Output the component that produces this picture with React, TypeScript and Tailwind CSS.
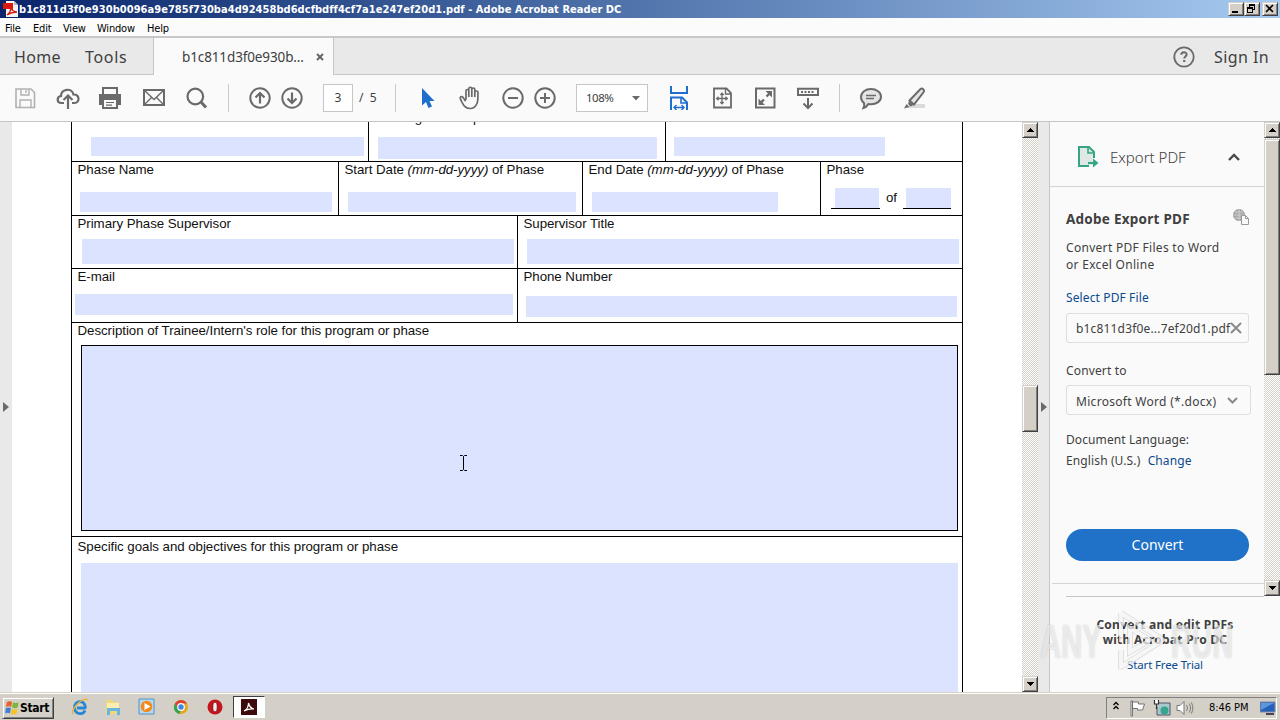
import type { ReactNode } from "react";
import clsx from "clsx";

interface IconProps {
  className?: string;
  children: ReactNode;
}

// 24x24 outline icon used all over the Acrobat toolbar
const Icon = ({ className, children }: IconProps) => (
  <svg
    viewBox="0 0 24 24"
    className={clsx("size-6 shrink-0", className)}
    fill="none"
    stroke="currentColor"
    strokeWidth={2}
  >
    {children}
  </svg>
);

const Divider = ({ className }: { className?: string }) => (
  <div className={clsx("h-7 w-px shrink-0 bg-[#c9c9c9]", className)} />
);

const bevel =
  "border border-t-[#d4d0c8] border-l-[#d4d0c8] border-r-[#404040] border-b-[#404040] bg-[#d4d0c8] shadow-[inset_1px_1px_0_#fff,inset_-1px_-1px_0_#808080]";

const ScrollButton = ({ down }: { down?: boolean }) => (
  <div className={clsx("flex h-4 w-full shrink-0 items-center justify-center", bevel)}>
    <svg viewBox="0 0 7 4" className="h-1 w-[7px]" shapeRendering="crispEdges">
      <path d={down ? "M0 0h7L3.500 4z" : "M0 4h7L3.500 0z"} fill="#000" />
    </svg>
  </div>
);

const track =
  "bg-[repeating-conic-gradient(#d4d0c8_0_25%,#ffffff_0_50%)] bg-[length:2px_2px]";

const TitleBar = () => (
  <div className="flex h-[18px] items-center bg-linear-to-r from-[#0a246a] to-[#a6caf0] pr-[2px] pl-[3px]">
    <svg viewBox="0 0 16 16" className="size-4 shrink-0">
      <path d="M3 0h8l4 4v12H3z" fill="#f4f4f4" />
      <path d="M11 0l4 4h-4z" fill="#bbb" />
      <path d="M0 2h10v6H0z" fill="#d9190f" />
      <path d="M4 14c3-2 4-6 4-8 1 4 3 5 6 5-4 0-7 1-10 3z" fill="none" stroke="#d9190f" strokeWidth="1.300" />
    </svg>
    <span className="pt-px font-['DejaVu_Sans_Condensed','DejaVu_Sans',sans-serif] text-[11px] leading-[17px] font-bold tracking-[0.045px] whitespace-nowrap text-white">
      b1c811d3f0e930b0096a9e785f730ba4d92458bd6dcfbdff4cf7a1e247ef20d1.pdf - Adobe Acrobat Reader DC
    </span>
    <div className="ml-auto flex shrink-0">
      <div className={clsx("h-[14px] w-4", bevel)}>
        <svg viewBox="0 0 14 12" className="h-3 w-3.5" shapeRendering="crispEdges">
          <path d="M3 8h6v2H3z" />
        </svg>
      </div>
      <div className={clsx("h-[14px] w-4", bevel)}>
        <svg viewBox="0 0 14 12" className="h-3 w-3.5" shapeRendering="crispEdges">
          <path d="M4 1h6v6H8V6h1V3H5v1H4zM2 4h6v6H2zM3 6v3h4V6z" fillRule="evenodd" />
        </svg>
      </div>
      <div className={clsx("ml-[2px] h-[14px] w-4", bevel)}>
        <svg viewBox="0 0 14 12" className="h-3 w-3.5">
          <path d="M3 2l7 7M10 2L3 9" stroke="#000" strokeWidth="1.600" />
        </svg>
      </div>
    </div>
  </div>
);

const MenuBar = () => (
  <div className="flex h-5 items-center border-b-2 border-[#c8c8c8] bg-[#fbfbfb] pt-[3px] pl-[5px] font-['DejaVu_Sans_Condensed','DejaVu_Sans',sans-serif] text-[11px] leading-[15px] tracking-[-0.2px] text-black">
    <span className="w-[28px]">File</span>
    <span className="w-[30px]">Edit</span>
    <span className="w-[34px]">View</span>
    <span className="w-[50px]">Window</span>
    <span>Help</span>
  </div>
);

const TabBar = () => (
  <div className="flex h-[37px] font-['Noto_Sans',sans-serif] text-[#404040]">
    <div className="flex w-[153px] items-center border-b border-[#c6c6c6] bg-[#e9e9e9] pt-px pl-[14px] text-base tracking-[0.3px]">
      <span className="w-[71px]">Home</span>
      <span className="tracking-[0.7px]">Tools</span>
    </div>
    <div className="flex w-[181px] items-center border-x border-[#c6c6c6] bg-[#fafafa] pt-px pl-7 text-[13.500px]">
      <span className="w-[134px] tracking-[-0.12px]">b1c811d3f0e930b...</span>
      <svg viewBox="0 0 8 8" className="size-2">
        <path d="M1 1l6 6M7 1L1 7" stroke="#666" strokeWidth="2" />
      </svg>
    </div>
    <div className="flex flex-1 items-center justify-end border-b border-[#c6c6c6] bg-[#e9e9e9] pt-px pr-[11px] text-base tracking-[0.4px]">
      <Icon className="mr-[18px] text-[#6a6a6a]">
        <circle cx="12" cy="12" r="9.700" strokeWidth="1.800" />
        <path d="M9.300 9.800c0-3.400 5.300-3.300 5.300-.3 0 1.900-2.400 2-2.400 4" />
        <path d="M11.100 15h2.200v2h-2.200z" fill="currentColor" stroke="none" />
      </Icon>
      <span>Sign In</span>
    </div>
  </div>
);

const Toolbar = () => (
  <div className="flex h-[47px] items-center border-b border-[#c6c6c6] bg-[#fafafa] pl-[13px] font-['Noto_Sans',sans-serif] text-xs text-[#404040] [&>svg]:text-[#6a6a6a]">
    <Icon className="opacity-50">
      <path d="M3 3h15l3.500 3.500V21.500H3z" strokeWidth="1.600" />
      <path d="M8 3v6h8V3M7 21v-7h11v7M13 4v3" strokeWidth="1.400" />
    </Icon>
    <Icon className="ml-[19px]">
      <path d="M8 17H5.500C.5 17 .5 10.500 5 10c0-7.500 11-8.500 12.500-1.500C24 8 24 17 18.500 17H16" strokeWidth="2.200" />
      <path d="M12 23V10M7.500 14L12 9.500l4.500 4.500" strokeWidth="2.200" />
    </Icon>
    <Icon className="ml-[18px]">
      <path d="M1 8h22v11h-4v-4H5v4H1z" fill="currentColor" stroke="none" />
      <path d="M5 8V2h14v6M5 14v8h14v-8" />
      <path d="M6 14h12v7H6z" fill="#fafafa" stroke="none" />
      <path d="M8 16.500h8M8 19.200h6" strokeWidth="1.200" />
    </Icon>
    <Icon className="ml-5">
      <path d="M2 4h20v15H2z" />
      <path d="M2.500 4.500L12 13.500l9.500-9M2.500 18.500l7-7M21.500 18.500l-7-7" strokeWidth="1.400" />
    </Icon>
    <Icon className="ml-[19px]">
      <circle cx="10.300" cy="10.500" r="7.800" strokeWidth="2.200" />
      <path d="M16 16l5 5.500" strokeWidth="3" />
    </Icon>
    <Divider className="ml-[19px]" />
    <Icon className="ml-[19px]">
      <circle cx="12" cy="12" r="9.700" />
      <path d="M12 17.500V7.500M7.500 11.500L12 7l4.500 4.500" strokeWidth="2.200" />
    </Icon>
    <Icon className="ml-2">
      <circle cx="12" cy="12" r="9.700" />
      <path d="M12 6.500v10M7.500 12.500L12 17l4.500-4.500" strokeWidth="2.200" />
    </Icon>
    <div className="ml-[19px] flex h-7 w-[30px] items-center justify-center border border-[#c6c6c6] bg-white">3</div>
    <span className="ml-[6px] w-6 whitespace-pre">/  5</span>
    <Divider className="ml-3" />
    <Icon className="ml-5 text-[#1e6fcc]!">
      <path d="M6 2v17.500l4-3.500 2.500 6 3.500-1.500-2.500-5.500h5z" fill="currentColor" stroke="none" />
    </Icon>
    <Icon className="ml-[18px]">
      <path
        d="M6.500 13.500V5.500c0-2 2.800-2 2.800 0V11.500V3.300c0-2.100 3-2.100 3 0V11.500V4c0-2 3-2 3 0v7.500V7c0-2 3.200-2 3.200 0-.2 4 .3 8-1 11-1.500 3.500-4 5-7 5-4.500 0-6.200-2.500-8-6.200L.9 13.300c-.9-2 1.500-2.800 2.700-1.300l2 3z"
        transform="translate(1.500 -.5)"
        strokeWidth="1.700"
      />
    </Icon>
    <Icon className="ml-[19px]">
      <circle cx="12" cy="12" r="9.700" />
      <path d="M7 12h10" />
    </Icon>
    <Icon className="ml-2">
      <circle cx="12" cy="12" r="9.700" />
      <path d="M7 12h10M12 7v10" />
    </Icon>
    <div className="ml-[19px] flex h-7 w-[72px] items-center justify-between border border-[#c6c6c6] bg-white pr-[7px] pl-[9px] text-[11.500px] tracking-[-0.5px]">
      108%
      <svg viewBox="0 0 8 5" className="h-[5px] w-2">
        <path d="M0 0h8L4 4.500z" fill="#6a6a6a" />
      </svg>
    </div>
    <Icon className="ml-[19px] text-[#1e6fcc]!">
      <path d="M4 0v7h16V0M4 24V11.500h11l5 5V24" />
      <path d="M14 11.500V17h6" strokeWidth="1.600" />
      <path d="M7 21.500h10M9.500 19L7 21.500l2.500 2.500M14.500 19l2.500 2.500-2.500 2.500" strokeWidth="1.400" />
    </Icon>
    <Icon className="ml-[19px]">
      <path d="M4 2.500h12.500L21 7v14.500H4z" strokeWidth="1.800" />
      <path d="M15.500 2.500V8H21" strokeWidth="1.400" />
      <path d="M12 7.500v10M7 12.500h10M10.300 9L12 7.200 13.700 9M10.300 16l1.700 1.800 1.700-1.800M8.500 10.800l-1.800 1.700 1.800 1.700M15.500 10.800l1.800 1.700-1.800 1.700" strokeWidth="1.300" />
    </Icon>
    <Icon className="ml-[19px]">
      <path d="M3 2.500h18.500v19H3z" />
      <path d="M7 17.500l4-4M13.500 10.500l4-4" strokeWidth="2.400" />
      <path d="M5.500 12.500v6.500h6.500zM19 5h-6.500l6.500 6.500z" fill="currentColor" stroke="none" />
    </Icon>
    <Icon className="ml-[19px]">
      <path d="M2 2.800h20V9H2z" />
      <path d="M5 6h14" strokeDasharray="2 1.500" />
      <path d="M12 12v9.500M7.500 17.500L12 22l4.500-4.500" />
    </Icon>
    <Divider className="ml-[19px]" />
    <Icon className="ml-[19px]">
      <path d="M12 3c5.500 0 10 3.300 10 7.700s-4.500 7.600-10 7.600c-1 0-1.800 0-2.700-.2C8 20 6.500 21.500 4.500 22c.8-1.600.9-3.300.5-5-1.800-1.400-3-3.500-3-6C2 6.300 6.500 3 12 3z" fill="#e4e4e4" />
      <path d="M7 9.500h10M7 12.500h8" strokeWidth="1.300" />
    </Icon>
    <Icon className="ml-[19px]">
      <path d="M9 18h14v4H5z" fill="#dadada" stroke="none" />
      <path d="M7.500 14.500L18.500 3c1.800-1.400 4.500.8 3.200 3L12 18.500z" fill="#e4e4e4" />
      <path d="M7 15l4.500 4-3 1.500-2.500-2.500zM4.500 18l3 3-5.500 1.500z" fill="currentColor" stroke="none" />
    </Icon>
  </div>
);

interface CellProps {
  label?: ReactNode;
  className?: string;
  field?: string;
  children?: ReactNode;
}

// one boxed cell of the form: label at the top, blue field under it
const Cell = ({ label, className, field, children }: CellProps) => (
  <div className={clsx("shrink-0 overflow-hidden", className)}>
    {label && <p className="h-[15px] pl-[5.500px] leading-[15px] whitespace-nowrap">{label}</p>}
    {field && <div className={clsx("bg-[#dce3ff]", field)} />}
    {children}
  </div>
);

const Page = () => (
  <div className="ml-[59px] flex h-full w-[892px] flex-col overflow-hidden border-x border-black font-['Liberation_Sans',Arial,sans-serif] text-[13.300px] tracking-[-0.045px] text-[#111]">
    <div className="flex h-10 shrink-0 border-b border-black">
      <Cell className="w-[297px] border-r border-black pt-[15px]" field="ml-[19px] h-[19px] w-[273px]" />
      <div className="relative w-[297px] shrink-0 overflow-hidden border-r border-black pt-[15px]">
        <span className="absolute top-[-12px] left-[8px] leading-[15px] tracking-[-0.35px] whitespace-nowrap">
          Training/Internship
        </span>
        <div className="ml-[9px] h-[22px] w-[279px] bg-[#dce3ff]" />
      </div>
      <Cell className="pt-[15px]" field="ml-2 h-[19px] w-[211px]" />
    </div>
    <div className="flex h-[54px] shrink-0 border-b border-black">
      <Cell label="Phase Name" className="w-[267px] border-r border-black" field="mt-[15px] ml-2 h-5 w-[252px]" />
      <Cell
        label={<>Start Date <i>(mm-dd-yyyy)</i> of Phase</>}
        className="w-[244px] border-r border-black"
        field="mt-[15px] ml-[9px] h-5 w-[228px]"
      />
      <Cell
        label={<>End Date <i>(mm-dd-yyyy)</i> of Phase</>}
        className="w-[238px] border-r border-black"
        field="mt-[15px] ml-[9px] h-5 w-[186px]"
      />
      <Cell label="Phase" className="w-[141px]">
        <div className="mt-[11px] flex pl-[10px]">
          <div className="h-[21px] w-[49px] border-b border-black pr-px pl-1">
            <div className="h-5 bg-[#dce3ff]" />
          </div>
          <span className="w-[23px] pt-[2px] text-center leading-[15px]">of</span>
          <div className="h-[21px] w-12 border-b border-black pl-[3px]">
            <div className="h-5 bg-[#dce3ff]" />
          </div>
        </div>
      </Cell>
    </div>
    <div className="flex h-[53px] shrink-0 border-b border-black">
      <Cell label="Primary Phase Supervisor" className="w-[446px] border-r border-black" field="mt-2 ml-[10px] h-[25px] w-[432px]" />
      <Cell label="Supervisor Title" className="w-[444px]" field="mt-2 ml-[9px] h-[25px] w-[432px]" />
    </div>
    <div className="flex h-[54px] shrink-0 border-b border-black">
      <Cell label="E-mail" className="w-[446px] border-r border-black" field="mt-[10px] ml-[3px] h-[21px] w-[438px]" />
      <Cell label="Phone Number" className="w-[444px]" field="mt-3 ml-2 h-[21px] w-[431px]" />
    </div>
    <Cell
      label="Description of Trainee/Intern's role for this program or phase"
      className="h-[214px] border-b border-black"
      field="mt-[7px] ml-[9px] h-[186px] w-[877px] border border-black"
    />
    <Cell
      label="Specific goals and objectives for this program or phase"
      className="h-[155px] pt-[2px]"
      field="mt-[9px] ml-[9px] h-[129px] w-[877px]"
    />
  </div>
);

const ExportPanel = () => (
  <aside className="flex w-[230px] shrink-0 flex-col bg-[#fafafa] font-['Noto_Sans',sans-serif] text-[12px] leading-[17px] text-[#404040]">
    <div className="flex h-[475px]">
      <div className="w-[214px]">
        <div className="flex h-[65px] items-center border-b border-[#d4d4d4] pt-[6px] pl-[27px]">
          <svg viewBox="0 0 22 22" className="size-[22px]" fill="none" stroke="#35a585" strokeWidth="2">
            <path d="M12 20H2V1h10l5 5v6" fill="#e0e8e6" />
            <path d="M11 1v6h6" strokeWidth="1.600" />
            <path d="M11 17h6" strokeWidth="2.200" />
            <path d="M16 12.500l5.500 4.500-5.500 4.500z" fill="#35a585" stroke="none" />
          </svg>
          <span className="ml-[11px] w-[118px] text-[15px] font-light">Export PDF</span>
          <svg viewBox="0 0 12 8" className="h-2 w-3">
            <path d="M1 7l5-5 5 5" fill="none" stroke="#4a4a4a" strokeWidth="2.400" />
          </svg>
        </div>
        <div className="pt-[22px] pl-4">
          <div className="flex h-5 w-[183px] items-start justify-between">
            <h2 className="text-[13.500px] leading-5 font-bold tracking-[0.25px]">Adobe Export PDF</h2>
            <svg viewBox="0 0 16 16" className="size-4" fill="none" stroke="#999">
              <circle cx="6" cy="6" r="5.500" fill="#aaa" />
              <path d="M0 6h12M6 0v12M2 3h8M2 9h8" stroke="#ddd" strokeWidth=".7" />
              <path d="M8.500 6.500h4l3 3v6h-7z" fill="#fafafa" />
              <path d="M12.500 6.500v3h3" />
            </svg>
          </div>
          <p className="mt-[10px] w-[180px] tracking-[0.3px]">Convert PDF Files to Word<br />or Excel Online</p>
          <p className="mt-4 tracking-[0.12px] text-[#0b4a8f]">Select PDF File</p>
          <div className="mt-[7px] flex h-[30px] w-[183px] items-center justify-between rounded-[3px] border border-[#dedede] pr-[6px] pl-[9px]">
            <span className="w-[150px] tracking-[0.17px] whitespace-nowrap">b1c811d3f0e...7ef20d1.pdf</span>
            <svg viewBox="0 0 12 12" className="size-3 shrink-0">
              <path d="M1 1l10 10M11 1L1 11" stroke="#8a8a8a" strokeWidth="2" />
            </svg>
          </div>
          <p className="mt-[19px] tracking-[0.15px]">Convert to</p>
          <div className="mt-[6px] flex h-[30px] w-[185px] items-center justify-between rounded-[3px] border border-[#dedede] pr-3 pl-[9px]">
            <span className="pt-[2px] tracking-[0.3px] whitespace-nowrap">Microsoft Word (*.docx)</span>
            <svg viewBox="0 0 11 7" className="h-[7px] w-[11px]">
              <path d="M1 1l4.500 4.500L10 1" fill="none" stroke="#8a8a8a" strokeWidth="2" />
            </svg>
          </div>
          <p className="mt-4 tracking-[0.1px]">Document Language:</p>
          <p className="mt-1 tracking-[0.12px]">
            English (U.S.) <span className="ml-1 text-[#0b4a8f]">Change</span>
          </p>
          <button className="mt-[60px] block h-8 w-[183px] rounded-full bg-[#1f72c8] text-sm text-white">Convert</button>
        </div>
        <div className="mt-[22px] ml-[2px] h-px bg-[#d4d4d4]" />
        <div className="mt-3 ml-4 h-px bg-[#c6c6c6]" />
      </div>
      <div className={clsx("flex h-[474px] w-4 flex-col", track)}>
        <ScrollButton />
        <div className={clsx("mt-px h-[236px] w-4", bevel)} />
        <div className="mt-auto">
          <ScrollButton down />
        </div>
      </div>
    </div>
    <div className="pt-[20px] text-center">
      <p className="text-[12px] leading-[15px] font-bold tracking-[0.25px]">
        Convert and edit PDFs<br />with Acrobat Pro DC
      </p>
      <p className="mt-[9px] text-[11.500px] tracking-[-0.15px] text-[#0b4a8f]">Start Free Trial</p>
    </div>
  </aside>
);

const Taskbar = () => (
  <div className="flex h-7 items-center border-t border-[#d4d0c8] bg-[#d4d0c8] pl-[2px] font-['DejaVu_Sans_Condensed','DejaVu_Sans',sans-serif] text-[11px] text-black shadow-[inset_0_1px_0_#fff]">
    <div className={clsx("mt-[2px] flex h-[22px] w-[52px] items-center pl-[2px] font-bold", bevel)}>
      <svg viewBox="0 0 16 16" className="size-[15px] shrink-0">
        <path d="M2 2c2-1 4-1 5.500 0L6.500 7.500C5 6.500 3 6.500 1 7.500z" fill="#e8602c" />
        <path d="M8.500 2.500c2 1 4 1 6 0l-1 5.500c-2 1-4 1-6 0z" fill="#79b83c" />
        <path d="M.8 8.800c2-1 4-1 5.500 0l-1 5.500c-1.500-1-3-1-5 0z" fill="#3f7fd8" />
        <path d="M7.300 9.300c2 1 4 1 6 0l-1 5.500c-2 1-4 1-6 0z" fill="#f5c129" />
      </svg>
      <span className="pt-px text-[12px] tracking-[-0.35px]">Start</span>
    </div>
    <svg viewBox="0 0 18 18" className="mt-px ml-[17px] size-[18px]">
      <path d="M14 12.500c-2 5-10.500 4-10.500-3s9-8 10.800-1c.2 1-.1 1.500-.3 1.500H6" fill="none" stroke="#2687d6" strokeWidth="2.800" />
      <path d="M2 16C-1 12 12-2 17 2" fill="none" stroke="#e9b23a" strokeWidth="1.400" />
    </svg>
    <svg viewBox="0 0 18 18" className="mt-px ml-[15px] size-[18px]">
      <path d="M2 2h6l1 2h6v12H2z" fill="#f2d87c" />
      <path d="M3 5h12v5H3z" fill="#fbeeb0" />
      <path d="M3 10h13v7h-3v-4H6v4H3z" fill="#68b5df" />
    </svg>
    <svg viewBox="0 0 18 18" className="mt-px ml-4 size-[18px]">
      <path d="M1 1h15v15H1z" fill="#b8d8f0" stroke="#4d94c9" />
      <circle cx="8.500" cy="8.500" r="5.800" fill="#f28a1c" />
      <path d="M6.500 5v7l6-3.500z" fill="#fff" />
    </svg>
    <svg viewBox="0 0 18 18" className="mt-px ml-4 size-[18px]">
      <circle cx="9" cy="9" r="7" fill="#e4a91f" />
      <path d="M2.900 5.500a7 7 0 0 1 12.200 0H9L5.500 11z" fill="#dd4236" />
      <path d="M2.900 5.500L6 11l3 1-1.500 4A7 7 0 0 1 2.900 5.500z" fill="#34a252" />
      <circle cx="9" cy="9" r="3.300" fill="#4184e8" stroke="#fff" strokeWidth="1.200" />
    </svg>
    <svg viewBox="0 0 18 18" className="mt-px ml-4 size-[18px]">
      <circle cx="9" cy="9" r="7.500" fill="#c4151c" />
      <ellipse cx="9" cy="9" rx="2.300" ry="5" fill="#eee" stroke="#8d0c10" />
    </svg>
    <div className="mt-px ml-[9px] flex h-[22px] w-8 items-center justify-center border border-t-[#404040] border-r-white border-b-white border-l-[#404040] bg-white">
      <svg viewBox="0 0 16 16" className="size-4">
        <path d="M0 0h16v16H0z" fill="#3d0b0b" />
        <path d="M3 12c3-1.500 4.500-5 4.500-8 1 4 2.500 5.500 5.500 6-3.500-.5-7 .5-10 2z" fill="none" stroke="#fff" strokeWidth="1.200" />
      </svg>
    </div>
    <div className="mt-[2px] mr-[3px] ml-auto flex h-[22px] w-[171px] items-center border border-t-[#808080] border-r-white border-b-white border-l-[#808080] pl-[6px]">
      <svg viewBox="0 0 6 9" className="mb-1 h-[9px] w-[6px]" fill="none" stroke="#000" strokeWidth="1.300">
        <path d="M.5 4L3 1.500 5.500 4M.5 8L3 5.500 5.500 8" />
      </svg>
      <svg viewBox="0 0 18 18" className="ml-[10px] size-[18px]" stroke="#666" strokeWidth=".9" fill="#fff">
        <path d="M2 2h1.500v15H2zM3.500 3h6v2h6l-2 6H8.500V9.500h-5z" />
      </svg>
      <svg viewBox="0 0 18 18" className="ml-[6px] size-[18px]">
        <path d="M6 4h11v12H4V8" fill="#a8c8cc" stroke="#556" />
        <circle cx="11.500" cy="11.500" r="4" fill="#37a48c" />
        <path d="M1.500 1v4h4V1M3.500 5v5" fill="#fff" stroke="#333" strokeWidth="1.200" />
      </svg>
      <svg viewBox="0 0 18 18" className="ml-[5px] size-[18px]" stroke="#777" fill="none">
        <path d="M1 6.500h3L8 2.500v13l-4-4H1z" fill="#fff" />
        <path d="M10.500 6c1.200 2 1.200 4 0 6M13 4.500c2 3 2 6 0 9M15.300 3.500c2 4 2 7 0 11" />
      </svg>
      <span className="ml-[15px] w-[51px] pt-px tracking-[-0.05px] whitespace-nowrap">8:46 PM</span>
      <svg viewBox="0 0 16 14" className="h-3.5 w-4">
        <path d="M0 1h15v10H0z" fill="#2462b8" stroke="#88a" />
        <path d="M1 2h13L1 9z" fill="#5c97dc" />
        <path d="M6 12h8v2H6z" fill="#445" />
      </svg>
    </div>
  </div>
);

// translucent brand mark lying over the lower right corner
const Watermark = () => (
  <div className="pointer-events-none absolute top-[610px] left-[1040px] h-[64px] w-[200px] font-['Liberation_Sans',Arial,sans-serif] text-[48px] leading-[64px] font-bold text-white/60 [text-shadow:0_0_2px_rgba(0,0,0,0.2)]">
    <span className="absolute top-0 left-0 origin-left scale-x-[0.61]">ANY</span>
    <svg viewBox="0 0 60 60" className="absolute top-0 left-[66px] h-[60px] w-[60px]" fill="none">
      <path d="M15 3l42 27-42 27V40M15 32V3M24 18v24l20-12z" stroke="#000" strokeOpacity=".1" strokeWidth="6" />
      <path d="M15 3l42 27-42 27V40M15 32V3M24 18v24l20-12z" stroke="#fff" strokeOpacity=".7" strokeWidth="4" />
    </svg>
    <span className="absolute top-0 left-[131px] origin-left scale-x-[0.6]">RUN</span>
  </div>
);

export default function App() {
  return (
    <div className="relative flex h-[720px] w-[1280px] flex-col overflow-hidden bg-white">
      <TitleBar />
      <MenuBar />
      <TabBar />
      <Toolbar />
      <main className="flex h-[570px]">
        <div className="flex w-3 shrink-0 items-center bg-[#e9e9e9] pl-[3px]">
          <svg viewBox="0 0 6 10" className="h-[10px] w-[6px]">
            <path d="M0 0l6 5-6 5z" fill="#6a6a6a" />
          </svg>
        </div>
        <div className="w-[1010px] shrink-0 bg-white">
          <Page />
        </div>
        <div className={clsx("flex w-4 shrink-0 flex-col", track)}>
          <ScrollButton />
          <div className={clsx("mt-[247px] h-[47px] w-4", bevel)} />
          <div className="mt-auto">
            <ScrollButton down />
          </div>
        </div>
        <div className="flex w-3 shrink-0 items-center border-r border-[#c6c6c6] bg-[#e9e9e9] pl-[3px]">
          <svg viewBox="0 0 6 10" className="h-[10px] w-[6px]">
            <path d="M0 0l6 5-6 5z" fill="#6a6a6a" />
          </svg>
        </div>
        <ExportPanel />
      </main>
      <Taskbar />
      <Watermark />
      <svg viewBox="0 0 9 16" className="absolute top-[455px] left-[459px] h-4 w-[9px]" fill="none" stroke="#000">
        <path d="M1 .5h2.500l1 1 1-1H8M4.500 1.500v13M1 15.500h2.500l1-1 1 1H8" />
      </svg>
    </div>
  );
}
